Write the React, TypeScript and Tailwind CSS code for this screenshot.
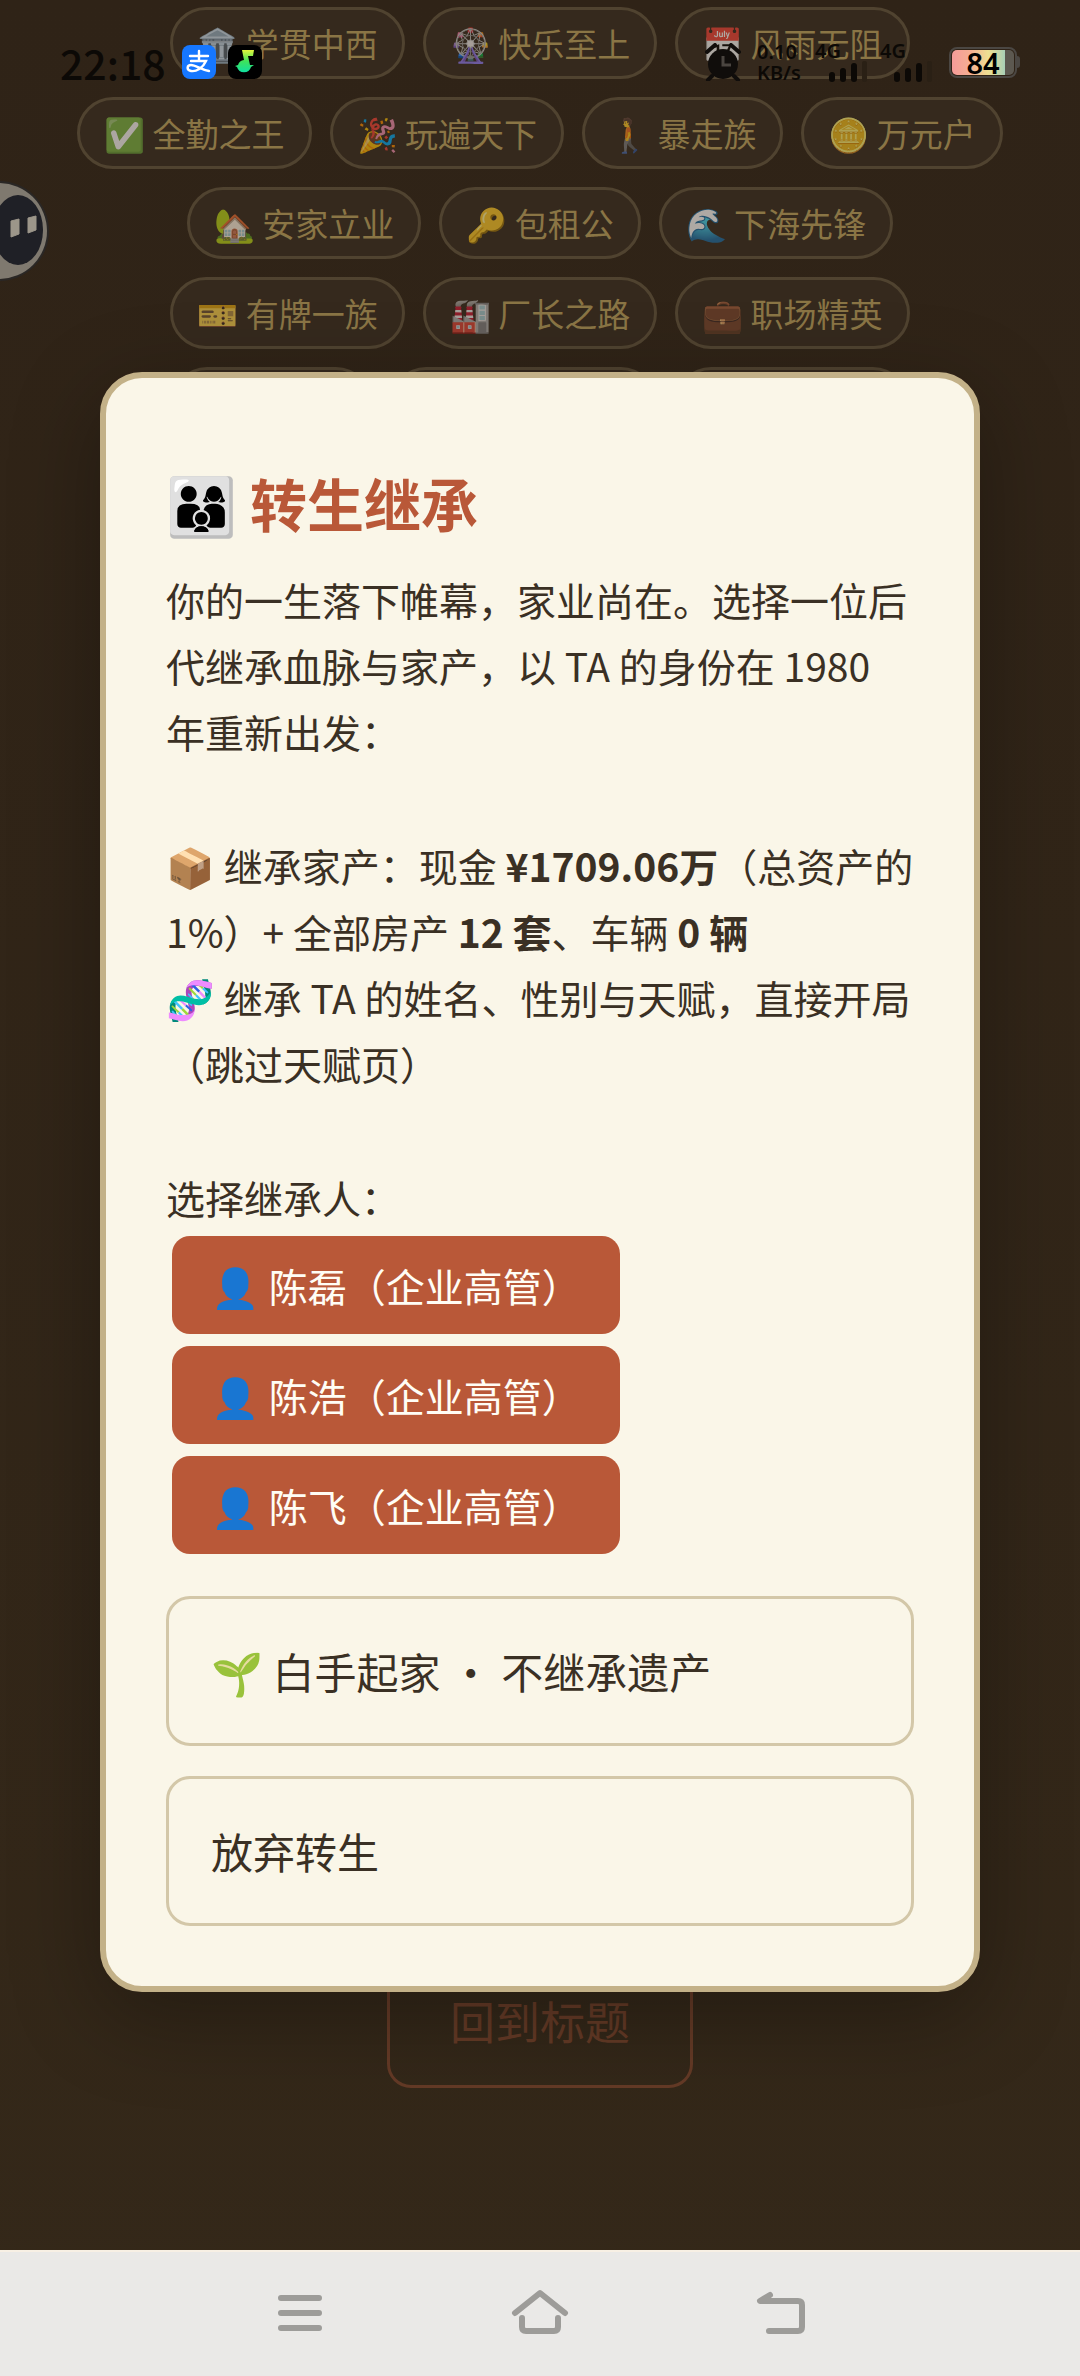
import type { ReactNode } from 'react';

const achievementRows = [
  [
    { icon: '🏛️', label: '学贯中西' },
    { icon: '🎡', label: '快乐至上' },
    { icon: '📅', label: '风雨无阻' },
  ],
  [
    { icon: '✅', label: '全勤之王' },
    { icon: '🎉', label: '玩遍天下' },
    { icon: '🚶', label: '暴走族' },
    { icon: '🪙', label: '万元户' },
  ],
  [
    { icon: '🏡', label: '安家立业' },
    { icon: '🔑', label: '包租公' },
    { icon: '🌊', label: '下海先锋' },
  ],
  [
    { icon: '🎫', label: '有牌一族' },
    { icon: '🏭', label: '厂长之路' },
    { icon: '💼', label: '职场精英' },
  ],
];

const heirs = ['陈磊', '陈浩', '陈飞'];

function Chip({ children, className = '' }: { children?: ReactNode; className?: string }) {
  return (
    <li
      className={`h-[72px] rounded-full border-3 border-[#504330] bg-[#35291d] px-6 text-[33px] leading-[66px] whitespace-nowrap text-[#8a7545] ${className}`}
    >
      {children}
    </li>
  );
}

function SignalBars() {
  return (
    <svg viewBox="0 0 40 22" className="h-[22px] w-10" aria-hidden="true">
      <rect x="2" y="11" width="6" height="10" rx="3" fill="#0c0906" />
      <rect x="13" y="7" width="6" height="14" rx="3" fill="#0c0906" />
      <rect x="24" y="2" width="6" height="19" rx="3" fill="#0c0906" />
      <rect x="35" y="0" width="5" height="21" rx="2" fill="#2a2015" />
    </svg>
  );
}

function StatusBar() {
  return (
    <header className="absolute inset-x-0 top-0 z-20 flex h-[124px] items-center justify-between px-[60px] font-['Noto_Sans','Noto_Sans_CJK_SC',sans-serif] text-[#0c0906]">
      <div className="flex items-center gap-3">
        <span className="mr-1 font-['Noto_Sans_CJK_SC',sans-serif] text-[41px] leading-none font-medium">22:18</span>
        <svg viewBox="0 0 34 34" className="size-[34px]" aria-hidden="true">
          <rect width="34" height="34" rx="8" fill="#1677ff" />
          <path
            d="M8 11h18M17 6v9M9 16h15c-3 7-10 11-15 10-5-1-4-6 0-6 5 0 10 5 18 6"
            fill="none"
            stroke="#fff"
            strokeWidth="2.4"
            strokeLinecap="round"
          />
        </svg>
        <svg viewBox="0 0 34 34" className="size-[34px]" aria-hidden="true">
          <defs>
            <linearGradient id="note" x1="0" y1="0" x2="0" y2="1">
              <stop offset="0" stopColor="#e4f53c" />
              <stop offset="0.5" stopColor="#3fe35a" />
              <stop offset="1" stopColor="#10e0a0" />
            </linearGradient>
          </defs>
          <rect width="34" height="34" rx="8" fill="#000" />
          <path
            d="M14 5h12l-1 6h-5l2 9h4l-3 2a7.300 7.300 0 0 1-14 0l-2-1 3-1a7 7 0 0 1 6-5z"
            fill="url(#note)"
          />
        </svg>
      </div>
      <div className="flex items-center">
        <svg viewBox="0 0 36 38" className="mr-4 h-[38px] w-9" aria-hidden="true">
          <circle cx="18" cy="21" r="15" fill="#100d0b" />
          <path d="M2 9l8-7M34 9l-8-7M7 33l-4 4M29 33l4 4" stroke="#100d0b" strokeWidth="4" strokeLinecap="round" />
          <path d="M18 13v9h8" fill="none" stroke="#4a4540" strokeWidth="3" />
        </svg>
        <div className="w-[58px] text-[20px] leading-[21px] font-semibold">
          <div>0.10</div>
          <div>KB/s</div>
        </div>
        <div className="w-[65px]">
          <div className="text-[20px] leading-5 font-semibold">4G</div>
          <div className="pl-3"><SignalBars /></div>
        </div>
        <div className="w-[65px]">
          <div className="text-[20px] leading-5 font-semibold">4G</div>
          <div className="pl-3"><SignalBars /></div>
        </div>
        <div className="flex items-center pl-1">
          <div className="flex h-[31px] w-[68px] items-center justify-center rounded-lg border-2 border-[#4b4743] bg-[linear-gradient(to_right,#f59a9a_0%,#f5b092_32%,#efe092_58%,#a9d0b6_84%,#5c5850_84%)] bg-clip-content p-px text-[29px] leading-none font-semibold text-black">
            84
          </div>
          <div className="h-3 w-[3px] rounded-r bg-[#4b4743]" />
        </div>
      </div>
    </header>
  );
}

function FloatingBall() {
  return (
    <svg viewBox="0 0 50 104" className="absolute top-[180px] left-0 h-[104px] w-[50px]" aria-hidden="true">
      <circle cx="-1" cy="51" r="50" fill="#2a2725" />
      <circle cx="-1" cy="51" r="48" fill="#7f796f" />
      <ellipse cx="18" cy="50" rx="25" ry="35" fill="#1f2026" />
      <path d="M11 41l8-2v15l-8 3zM28 38l8-2v14l-8 3z" fill="#9c968a" stroke="#9c968a" strokeLinejoin="round" />
    </svg>
  );
}

function NavBar() {
  return (
    <nav className="relative z-20 flex h-[126px] items-center justify-center gap-[180px] border-t-2 border-[#f8f0e4] bg-[#eae9e7] text-[#9d9c99]">
      <button type="button" aria-label="菜单">
        <svg viewBox="0 0 60 60" className="size-[60px]" fill="none" stroke="currentColor" strokeWidth="6" strokeLinecap="round">
          <path d="M11 14h38M11 29h38M11 44h38" />
        </svg>
      </button>
      <button type="button" aria-label="主页">
        <svg viewBox="0 0 60 60" className="size-[60px]" fill="none" stroke="currentColor" strokeWidth="6" strokeLinecap="round" strokeLinejoin="round">
          <path d="M5 29L30 9l25 20M12 34v9q0 4 4 4h28q4 0 4-4v-9" />
        </svg>
      </button>
      <button type="button" aria-label="返回">
        <svg viewBox="0 0 60 60" className="size-[60px]" fill="none" stroke="currentColor" strokeWidth="6" strokeLinecap="round" strokeLinejoin="round">
          <path d="M20 11L10 17h38q4 0 4 4v22q0 4-4 4H19" />
        </svg>
      </button>
    </nav>
  );
}

export default function App() {
  return (
    <div className="relative flex min-h-screen w-full flex-col overflow-hidden bg-linear-to-b from-[#2f2317] to-[#342819] font-['Noto_Sans_CJK_SC','Noto_Sans',sans-serif]">
      <StatusBar />

      {/* Result page behind the dialog */}
      <main className="flex flex-1 flex-col items-center justify-between pt-[7px] pb-[162px]">
        <div className="flex flex-col gap-[18px]">
          {achievementRows.map((row) => (
            <ul key={row[0].label} className="flex justify-center gap-[18px]">
              {row.map((item) => (
                <Chip key={item.label}>
                  <span className="opacity-60">{item.icon}</span> {item.label}
                </Chip>
              ))}
            </ul>
          ))}
          <ul className="flex justify-center gap-[18px]" aria-hidden="true">
            <Chip className="w-[201px]" />
            <Chip className="w-[267px]" />
            <Chip className="w-[234px]" />
          </ul>
        </div>
        <button
          type="button"
          className="rounded-3xl border-3 border-[#643a26] px-[60px] py-7 text-[45px] leading-[72px] text-[#643a26]"
        >
          回到标题
        </button>
      </main>

      <FloatingBall />

      {/* Inheritance dialog */}
      <div className="absolute inset-x-0 top-0 bottom-[126px] z-10 flex items-center justify-center px-[100px] pt-[114px]">
        <section
          role="dialog"
          aria-labelledby="dialog-title"
          className="w-full rounded-[42px] border-6 border-[#c3b188] bg-[#faf6e8] p-[60px] text-[#3a3024] shadow-[0_24px_90px_rgba(0,0,0,0.3)]"
        >
          <h2 id="dialog-title" className="my-4 text-[57px] leading-[96px] font-bold text-[#b95838]">
            👨‍👩‍👦 转生继承
          </h2>
          <div className="text-[39px] leading-[66px]">
            <p>你的一生落下帷幕，家业尚在。选择一位后代继承血脉与家产，以 TA 的身份在 1980 年重新出发：</p>
            <p className="mt-17">
              📦 继承家产：现金 <b>¥1709.06万</b>（总资产的 1%）+ 全部房产 <b>12 套</b>、车辆 <b>0 辆</b>
            </p>
            <p>🧬 继承 TA 的姓名、性别与天赋，直接开局（跳过天赋页）</p>
            <p className="mt-17">选择继承人：</p>
          </div>
          <div className="m-[6px] flex flex-col items-start gap-3">
            {heirs.map((name) => (
              <button
                key={name}
                type="button"
                className="rounded-[18px] bg-[#b95838] px-[39px] py-4 text-[39px] leading-[66px] text-[#fffdf5]"
              >
                👤 {name}（企业高管）
              </button>
            ))}
          </div>
          <div className="mt-[42px] flex flex-col gap-[30px]">
            {['🌱 白手起家 · 不继承遗产', '放弃转生'].map((label) => (
              <button
                key={label}
                type="button"
                className="rounded-3xl border-3 border-[#d3c7a8] px-[42px] py-9 text-left text-[42px] leading-[72px]"
              >
                {label}
              </button>
            ))}
          </div>
        </section>
      </div>

      <NavBar />
    </div>
  );
}
